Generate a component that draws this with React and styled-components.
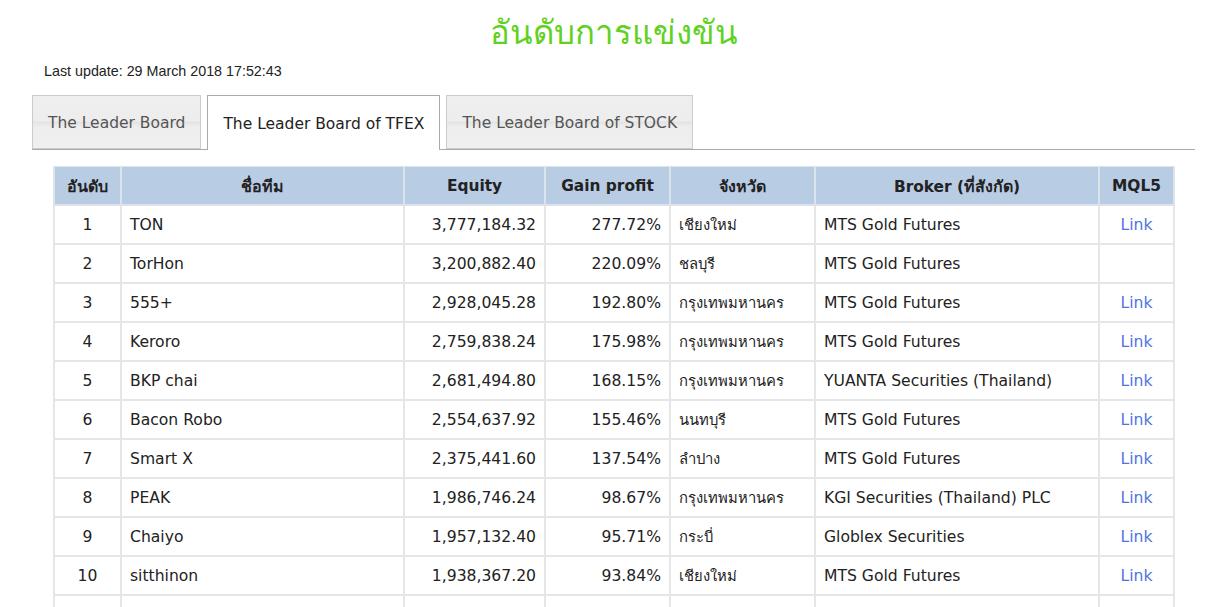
import React from "react";
import styled, { createGlobalStyle } from "styled-components";

const Global = createGlobalStyle`
  html, body { margin: 0; padding: 0; background: #fff; }
  body { font-family: "DejaVu Sans", Tahoma, sans-serif; color: #222; }
`;

const Page = styled.div`
  padding: 0 36px 0 32px;
`;

const Title = styled.h1`
  margin: 0;
  padding-top: 8px;
  height: 48px;
  text-align: center;
  font-family: "Noto Sans", "DejaVu Sans", sans-serif;
  font-weight: 400;
  font-size: 33px;
  line-height: 48px;
  color: #5fd21f;
`;

const Updated = styled.div`
  margin: 7px 0 0 12px;
  font-family: "Liberation Sans", Arial, sans-serif;
  font-size: 14.3px;
  line-height: 16px;
  color: #222;
`;

const TabBar = styled.div`
  display: flex;
  gap: 6px;
  margin-top: 16px;
  border-bottom: 1px solid #aaa;
  height: 54px;
`;

const Tab = styled.div`
  box-sizing: border-box;
  height: ${(p) => (p.$active ? "55px" : "54px")};
  display: flex;
  align-items: center;
  padding: 2px 15px 0;
  font-size: 15.5px;
  color: ${(p) => (p.$active ? "#222" : "#555")};
  border: 1px solid ${(p) => (p.$active ? "#aaa" : "#ccc")};
  border-bottom: ${(p) => (p.$active ? "none" : "1px solid #ccc")};
  background: ${(p) =>
    p.$active
      ? "#fff"
      : "linear-gradient(#efefef 0%, #ededed 48%, #e3e3e3 50%, #eeeeee 60%, #efefef 100%)"};
`;

const Table = styled.table`
  margin: 16px 0 0 21px;
  width: 1120px;
  border-collapse: collapse;
  table-layout: fixed;
  font-size: 15.6px;
`;

const Th = styled.th`
  height: 38px;
  box-sizing: border-box;
  padding: 2px 8px 0;
  background: #b8cce4;
  border: 2px solid #dde3ea;
  border-top: 1px solid #dde3ea;
  color: #222;
  font-weight: 700;
  font-size: 15.4px;
  text-align: center;
`;

const Td = styled.td`
  height: 39px;
  box-sizing: border-box;
  padding: 2px 8px 0;
  border: 2px solid #e4e6e8;
  color: #222;
  white-space: nowrap;
  text-align: ${(p) => p.$align || "left"};
`;

const Thai = styled.span`
  font-size: ${(p) => (p.$head ? "16px" : "14.8px")};
`;

const LinkA = styled.a`
  color: #4f73e3;
  text-decoration: none;
`;

const rows = [
  [1, "TON", "3,777,184.32", "277.72%", "เชียงใหม่", "MTS Gold Futures", true],
  [2, "TorHon", "3,200,882.40", "220.09%", "ชลบุรี", "MTS Gold Futures", false],
  [3, "555+", "2,928,045.28", "192.80%", "กรุงเทพมหานคร", "MTS Gold Futures", true],
  [4, "Keroro", "2,759,838.24", "175.98%", "กรุงเทพมหานคร", "MTS Gold Futures", true],
  [5, "BKP chai", "2,681,494.80", "168.15%", "กรุงเทพมหานคร", "YUANTA Securities (Thailand)", true],
  [6, "Bacon Robo", "2,554,637.92", "155.46%", "นนทบุรี", "MTS Gold Futures", true],
  [7, "Smart X", "2,375,441.60", "137.54%", "ลำปาง", "MTS Gold Futures", true],
  [8, "PEAK", "1,986,746.24", "98.67%", "กรุงเทพมหานคร", "KGI Securities (Thailand) PLC", true],
  [9, "Chaiyo", "1,957,132.40", "95.71%", "กระบี่", "Globlex Securities", true],
  [10, "sitthinon", "1,938,367.20", "93.84%", "เชียงใหม่", "MTS Gold Futures", true],
  [11, "", "", "", "", "", false],
];

export default function App() {
  return (
    <>
      <Global />
      <Page>
        <Title>อันดับการแข่งขัน</Title>
        <Updated>Last update: 29 March 2018 17:52:43</Updated>
        <TabBar>
          <Tab>The Leader Board</Tab>
          <Tab $active>The Leader Board of TFEX</Tab>
          <Tab>The Leader Board of STOCK</Tab>
        </TabBar>
        <Table>
          <colgroup>
            <col style={{ width: 67 }} />
            <col style={{ width: 283 }} />
            <col style={{ width: 141 }} />
            <col style={{ width: 125 }} />
            <col style={{ width: 145 }} />
            <col style={{ width: 284 }} />
            <col style={{ width: 75 }} />
          </colgroup>
          <thead>
            <tr>
              <Th><Thai $head>อันดับ</Thai></Th>
              <Th><Thai $head>ชื่อทีม</Thai></Th>
              <Th>Equity</Th>
              <Th>Gain profit</Th>
              <Th><Thai $head>จังหวัด</Thai></Th>
              <Th>Broker (<Thai $head>ที่สังกัด</Thai>)</Th>
              <Th>MQL5</Th>
            </tr>
          </thead>
          <tbody>
            {rows.map((r) => (
              <tr key={r[0]}>
                <Td $align="center">{r[0] <= 10 ? r[0] : ""}</Td>
                <Td>{r[1]}</Td>
                <Td $align="right">{r[2]}</Td>
                <Td $align="right">{r[3]}</Td>
                <Td><Thai>{r[4]}</Thai></Td>
                <Td>{r[5]}</Td>
                <Td $align="center">{r[6] ? <LinkA href="#">Link</LinkA> : ""}</Td>
              </tr>
            ))}
          </tbody>
        </Table>
      </Page>
    </>
  );
}
